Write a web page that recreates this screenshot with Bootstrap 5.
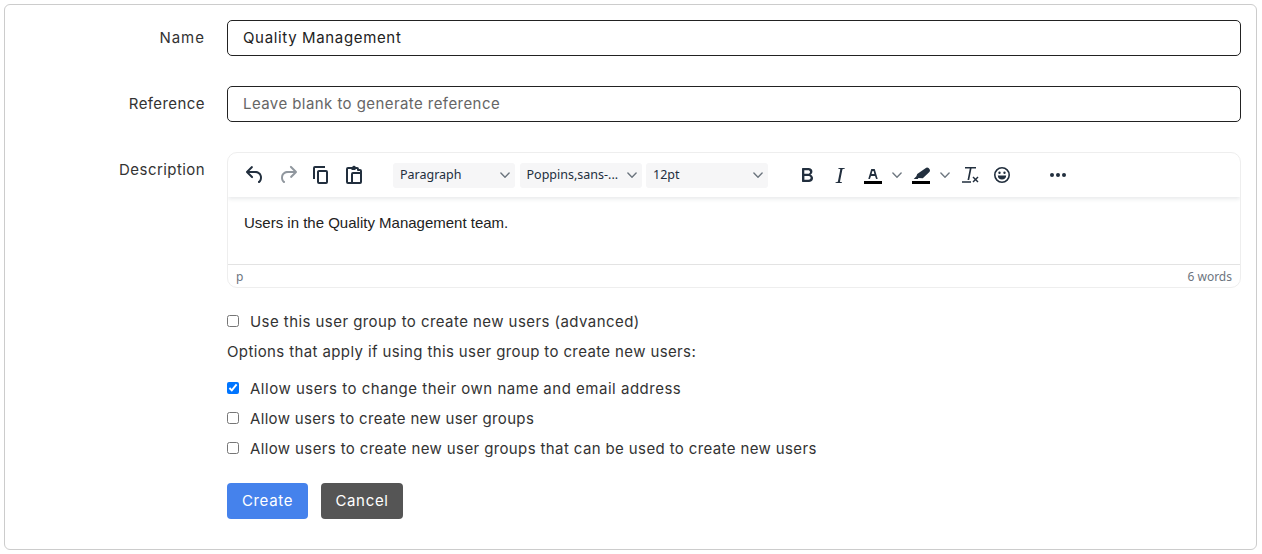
<!DOCTYPE html>
<html lang="en"><head><meta charset="utf-8"><title>Create user group</title>
<link href="https://cdn.jsdelivr.net/npm/bootstrap@5.3.0/dist/css/bootstrap.min.css" rel="stylesheet">
<style>
html,body{height:554px;overflow:hidden;background:#fff}
body{font-family:Inter,"Liberation Sans",sans-serif;font-size:15px;color:#222;padding:4px 5px 4px 4px}
.shell{border:1px solid #ccc;border-radius:6px;height:546px;padding:15px 15px 0 0}
.lbl{width:200px;flex:none;text-align:right;line-height:35px;color:#333;letter-spacing:.43px}
.lbl.wide{letter-spacing:1px}
.fieldwrap{margin-left:22px;flex:1;min-width:0}
.formrow{display:flex;margin-bottom:30px}
.txt{height:36px;border:1px solid #222;border-radius:5px;padding:0 15px 2px;font-size:15px;color:#222;letter-spacing:.43px}
#nm{letter-spacing:.65px}
.txt::placeholder{color:#666;opacity:1}
.txt:focus{border-color:#222;box-shadow:none}
.editor{height:136px;border:1px solid #eee;border-radius:10px;overflow:hidden;display:flex;flex-direction:column}
.tbar{height:44px;flex:none;display:flex;align-items:center;padding-left:10px;box-shadow:0 2px 4px rgba(34,47,62,.1);color:#222f3e;position:relative}
.ib{width:33px;height:24px;display:flex;align-items:center;justify-content:center;flex:none}
.ib svg{width:24px;height:24px;fill:currentColor;display:block}
.ib.off{color:rgba(34,47,62,.5)}
.pick{height:25px;width:122px;flex:none;margin-right:4.5px;background:#f6f6f7;border-radius:3px;display:flex;align-items:center;justify-content:space-between;padding:0 5px 1px 7px;font:12.5px "Noto Sans",sans-serif;color:#222f3e}
.pick svg,.cv svg{width:10px;height:10px;fill:rgba(34,47,62,.65);display:block}
.cv{width:15px;flex:none;display:flex;justify-content:center}
.sp1{width:23px;flex:none}.sp2{width:23px;flex:none}.sp3{width:18px;flex:none}
.body{flex:1;padding:16px;font:15px/20px "Liberation Sans",sans-serif;color:#222}
.stat{height:23px;flex:none;border-top:1px solid #e3e3e3;display:flex;justify-content:space-between;align-items:center;padding:0 8px;font:12px "Noto Sans",sans-serif;color:#6d7580}
.chk{display:flex;align-items:center;height:30px;line-height:30px;color:#333;letter-spacing:.38px}
.chk.l1{letter-spacing:.44px}.chk.l2{letter-spacing:.51px}.chk.l3{letter-spacing:.33px}
.chk input{width:11.5px;height:11.5px;margin:0 11.5px 0 0;flex:none;accent-color:#0075ff;position:relative;top:-1px}
.note{height:30px;line-height:30px;margin-bottom:7px;color:#333;letter-spacing:.38px}
.opts{margin-top:19px}
.acts{margin-top:19px;display:flex;gap:13px}
.acts .btn{height:36px;border:0;border-radius:4px;font-size:15px;padding:0;width:81px;color:#fff;line-height:36px;letter-spacing:.67px}
.go{background:#4582ec}.acts .btn.no{background:#555;width:82px}
</style></head><body>
<div class="shell">
 <form>
  <div class="formrow"><label class="lbl wide" for="nm">Name</label><div class="fieldwrap"><input id="nm" class="form-control txt" value="Quality Management"></div></div>
  <div class="formrow"><label class="lbl" for="rf">Reference</label><div class="fieldwrap"><input id="rf" class="form-control txt" placeholder="Leave blank to generate reference"></div></div>
  <div class="d-flex">
   <label class="lbl">Description</label>
   <div class="fieldwrap">
    <div class="editor">
     <div class="tbar">
      <span class="ib"><svg viewBox="0 0 24 24"><path d="M6.4 8H12c3.7 0 6.2 2 6.8 5.1.6 2.7-.4 5.6-2.3 6.8a1 1 0 0 1-1-1.8c1.1-.6 1.8-2.7 1.4-4.6-.5-2.1-2.1-3.5-4.9-3.5H6.4l3.3 3.3a1 1 0 1 1-1.4 1.4l-5-5a1 1 0 0 1 0-1.4l5-5a1 1 0 0 1 1.4 1.4L6.4 8Z"/></svg></span>
      <span class="ib off"><svg viewBox="0 0 24 24"><path d="M17.6 10H12c-2.8 0-4.4 1.4-4.9 3.5-.4 2 .3 4 1.4 4.6a1 1 0 1 1-1 1.8c-2-1.2-2.9-4.1-2.3-6.8.6-3 3-5.1 6.8-5.1h5.6l-3.3-3.3a1 1 0 1 1 1.4-1.4l5 5a1 1 0 0 1 0 1.4l-5 5a1 1 0 0 1-1.4-1.4l3.3-3.3Z"/></svg></span>
      <span class="ib"><svg viewBox="0 0 24 24"><path d="M16 3H6a2 2 0 0 0-2 2v11h2V5h10V3zm1 4a2 2 0 0 1 2 2v10a2 2 0 0 1-2 2h-7a2 2 0 0 1-2-2V9c0-1.2.9-2 2-2h7zm0 12V9h-7v10h7z"/></svg></span>
      <span class="ib"><svg viewBox="0 0 24 24"><path fill-rule="evenodd" d="M9 4h1.2a2 2 0 0 1 3.6 0H15a2 2 0 0 1 2 2h1a2 2 0 0 1 2 2v11a2 2 0 0 1-2 2H6a2 2 0 0 1-2-2V6a2 2 0 0 1 2-2h3Zm0 2H6v13h3v-8a2 2 0 0 1 2-2h7V8h-2a1 1 0 0 1-1-1V6h-1.5v1h-4V6H9Zm2 5v8h7v-8h-7Z"/></svg></span>
      <span class="sp1"></span>
      <div class="pick"><span>Paragraph</span><svg viewBox="0 0 10 10"><path d="M.4 2.6a.7.7 0 0 1 1 0L5 6.2l3.6-3.6a.7.7 0 0 1 1 1L5.5 7.7a.7.7 0 0 1-1 0L.4 3.6a.7.7 0 0 1 0-1Z"/></svg></div>
      <div class="pick"><span>Poppins,sans-...</span><svg viewBox="0 0 10 10"><path d="M.4 2.6a.7.7 0 0 1 1 0L5 6.2l3.6-3.6a.7.7 0 0 1 1 1L5.5 7.7a.7.7 0 0 1-1 0L.4 3.6a.7.7 0 0 1 0-1Z"/></svg></div>
      <div class="pick"><span>12pt</span><svg viewBox="0 0 10 10"><path d="M.4 2.6a.7.7 0 0 1 1 0L5 6.2l3.6-3.6a.7.7 0 0 1 1 1L5.5 7.7a.7.7 0 0 1-1 0L.4 3.6a.7.7 0 0 1 0-1Z"/></svg></div>
      <span class="sp3"></span>
      <span class="ib"><svg viewBox="0 0 24 24"><path d="M7.8 19c-.3 0-.5 0-.6-.2l-.2-.5V5.7c0-.2 0-.4.2-.5l.6-.2h5c1.5 0 2.7.3 3.5 1 .7.6 1.1 1.4 1.1 2.5a3 3 0 0 1-.6 1.9c-.4.6-1 1-1.6 1.2.4.1.9.3 1.3.6s.8.7 1 1.2c.4.4.5 1 .5 1.6 0 1.3-.4 2.3-1.3 3-.8.7-2.1 1-3.8 1H7.8zm5-8.3c.6 0 1.2-.1 1.6-.5.4-.3.6-.7.6-1.3 0-1.1-.8-1.7-2.3-1.7H9.3v3.5h3.4zm.5 6c.7 0 1.3-.1 1.7-.4.4-.4.6-.9.6-1.5s-.2-1-.7-1.4c-.4-.3-1-.4-2-.4H9.4v3.8h4z"/></svg></span>
      <span class="ib"><svg viewBox="0 0 24 24"><path d="M10.5 5h6.3l-.1.8-1.7.3c-.3 0-.5.2-.6.5l-2.4 11.8c0 .3.1.4.4.5l1.6.3-.1.8H7.5l.1-.8 1.7-.3c.3 0 .5-.2.6-.5l2.4-11.8c0-.3-.1-.4-.4-.5l-1.6-.3.1-.8Z"/></svg></span>
      <span class="ib"><svg viewBox="0 0 24 24"><path d="M3 18h18v3H3z" fill="#000"/><path d="M8.7 16h-.8a.5.5 0 0 1-.5-.6l2.7-9c.1-.3.3-.4.5-.4h2.8c.2 0 .4.1.5.4l2.7 9a.5.5 0 0 1-.5.6h-.8a.5.5 0 0 1-.4-.4l-.7-2.2c0-.3-.3-.4-.5-.4h-3.4c-.2 0-.4.1-.5.4l-.7 2.2c0 .3-.2.4-.4.4Zm2.600-7.600-.6 2a.5.5 0 0 0 .5.6h1.600a.5.5 0 0 0 .5-.6l-.6-2c0-.3-.3-.4-.5-.4h-.4c-.2 0-.4.1-.5.4Z"/></svg></span>
      <span class="cv"><svg viewBox="0 0 10 10"><path d="M.4 2.6a.7.7 0 0 1 1 0L5 6.2l3.6-3.6a.7.7 0 0 1 1 1L5.5 7.7a.7.7 0 0 1-1 0L.4 3.6a.7.7 0 0 1 0-1Z"/></svg></span>
      <span class="ib"><svg viewBox="0 0 24 24"><path d="M3 18h18v3H3z" fill="#000"/><path d="M16.5 5.200c.9-.9 2.300-.9 3.100-.1l.8.8c.8.8.8 2.200 0 3l-6.600 6.300-4.400-.2-.6 1H4.700l2.700-2.700.8-2.200 8.300-5.900Z"/></svg></span>
      <span class="cv"><svg viewBox="0 0 10 10"><path d="M.4 2.6a.7.7 0 0 1 1 0L5 6.2l3.6-3.6a.7.7 0 0 1 1 1L5.5 7.7a.7.7 0 0 1-1 0L.4 3.6a.7.7 0 0 1 0-1Z"/></svg></span>
      <span class="ib"><svg viewBox="0 0 24 24"><path d="M8 4h11v1.600h-4.500L12.200 17h-1.700l2.300-11.400H8V4Z"/><path d="M5 18.200h9v1.600H5zM15.500 14.500l1-1 2 2 2-2 1 1-2 2 2 2-1 1-2-2-2 2-1-1 2-2-2-2Z"/></svg></span>
      <span class="ib"><svg viewBox="0 0 24 24"><path d="M12 4a8 8 0 1 1 0 16 8 8 0 0 1 0-16Zm0 1.600a6.400 6.400 0 1 0 0 12.800 6.400 6.400 0 0 0 0-12.800ZM9.500 8.500a1.200 1.200 0 1 1 0 2.400 1.200 1.200 0 0 1 0-2.400Zm5 0a1.200 1.200 0 1 1 0 2.400 1.200 1.200 0 0 1 0-2.400ZM7.800 12.600h8.400c0 2.400-1.800 4-4.200 4s-4.200-1.600-4.200-4Z"/></svg></span>
      <span class="sp2"></span><span class="ib"><svg viewBox="0 0 24 24"><circle cx="6" cy="12" r="2"/><circle cx="12" cy="12" r="2"/><circle cx="18" cy="12" r="2"/></svg></span>
     </div>
     <div class="body">Users in the Quality Management team.</div>
     <div class="stat"><span>p</span><span>6 words</span></div>
    </div>
    <div class="opts">
     <label class="chk l1"><input type="checkbox">Use this user group to create new users (advanced)</label>
     <div class="note">Options that apply if using this user group to create new users:</div>
     <label class="chk l2"><input type="checkbox" checked>Allow users to change their own name and email address</label>
     <label class="chk l3"><input type="checkbox">Allow users to create new user groups</label>
     <label class="chk"><input type="checkbox">Allow users to create new user groups that can be used to create new users</label>
    </div>
    <div class="acts"><button type="button" class="btn go">Create</button><button type="button" class="btn no">Cancel</button></div>
   </div>
  </div>
 </form>
</div>
<script src="https://cdn.jsdelivr.net/npm/bootstrap@5.3.0/dist/js/bootstrap.bundle.min.js"></script>
</body></html>
